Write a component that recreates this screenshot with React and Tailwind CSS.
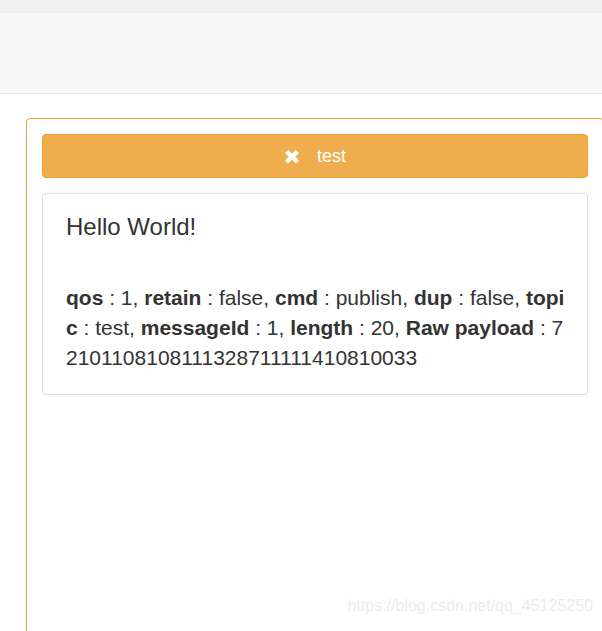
import React from "react";

const meta = [
  ["qos", "1"],
  ["retain", "false"],
  ["cmd", "publish"],
  ["dup", "false"],
  ["topic", "test"],
  ["messageId", "1"],
  ["length", "20"],
  ["Raw payload", "72101108108111328711111410810033"],
];

const TimesIcon = () => (
  <svg width="16" height="15" viewBox="0 0 16 15" className="shrink-0">
    <path
      d="M1.5 4.2 4.2 1.5 8 5.3l3.8-3.8 2.7 2.7L10.7 7.5l3.8 3.8-2.7 2.7L8 10.2l-3.8 3.8-2.7-2.7L5.3 7.5Z"
      fill="#fff"
      stroke="#fff"
      strokeWidth="1"
      strokeLinejoin="round"
    />
  </svg>
);

export default function App() {
  return (
    <div
      className="relative h-[631px] w-[602px] overflow-hidden bg-white text-[#333]"
      style={{ fontFamily: '"Liberation Sans", Arial, sans-serif' }}
    >
      {/* top bar */}
      <div className="h-[13px] bg-[#f0f0f0]" />
      <div className="h-[81px] border-b border-[#e7e7e7] bg-[#f8f8f8]" />

      {/* message panel */}
      <div className="ml-[26px] mt-[24px] h-[600px] w-[578px] rounded-[4px] border border-[#eea236] p-[15px]">
        <button className="flex h-[44px] w-full items-center justify-center gap-[17px] rounded-[4px] border border-[#eea236] bg-[#f0ad4e] text-[18px] text-white">
          <TimesIcon />
          <span>test</span>
        </button>

        <div className="mt-[15px] rounded-[4px] border border-[#dddddd] pb-[21px] pl-[23px] pr-[22px] pt-[20px]">
          <h3 className="text-[24px] leading-[26px]">Hello World!</h3>
          <div className="mt-[43px] break-all text-[21px] leading-[30px]">
            {meta.map(([k, v], i) => (
              <span key={k}>
                <b>{k}</b> : {v}
                {i < meta.length - 1 ? ", " : ""}
              </span>
            ))}
          </div>
        </div>
      </div>

      <div className="absolute bottom-[13px] right-[9px] text-[16px] text-[#ececec]">
        https://blog.csdn.net/qq_45125250
      </div>
    </div>
  );
}
